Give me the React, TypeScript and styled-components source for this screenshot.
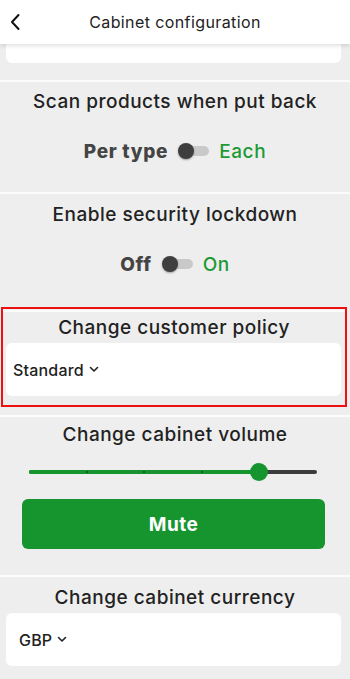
import React from "react";
import styled, { createGlobalStyle } from "styled-components";

const Global = createGlobalStyle`
  html, body { margin: 0; padding: 0; background: #eeeeee; }
  body { font-family: Inter, "Noto Sans", Roboto, sans-serif; overflow: hidden; }
  * { box-sizing: border-box; }
`;

const GREEN = "#16952f";

const Page = styled.div`
  width: 350px;
  height: 679px;
  background: #eeeeee;
  display: flex;
  flex-direction: column;
  overflow: hidden;
`;

const Header = styled.header`
  height: 44px;
  flex: none;
  background: #ffffff;
  display: flex;
  align-items: center;
  justify-content: center;
  position: relative;
  z-index: 2;
  box-shadow: 0 2px 4px rgba(0, 0, 0, 0.12);
`;

const BackButton = styled.button`
  position: absolute;
  left: 6px;
  top: 12px;
  width: 18px;
  height: 20px;
  border: 0;
  background: none;
  padding: 0;
  display: flex;
  align-items: center;
  justify-content: center;
`;

const HeaderTitle = styled.h1`
  margin: 0;
  font-size: 16px;
  font-weight: 400;
  color: #222;
  letter-spacing: 0.4px;
`;

const PeekCard = styled.div`
  height: 19px;
  margin: 0 9px 0 6px;
  background: #ffffff;
  border-radius: 0 0 6px 6px;
  flex: none;
`;

const Section = styled.section<{ $pt: number; $pb: number; $mt: number }>`
  margin-top: ${(p) => p.$mt}px;
  border-top: 2px solid #fbfbfb;
  padding: ${(p) => p.$pt}px 0 ${(p) => p.$pb}px;
  display: flex;
  flex-direction: column;
  align-items: center;
  flex: none;
`;

const Highlight = styled.div`
  margin: 0 3px 0 1px;
  border: 2px solid #ee1111;
  flex: none;
`;

const Title = styled.h2`
  margin: 0;
  font-size: 19px;
  line-height: 22px;
  font-weight: 500;
  color: #222;
  text-align: center;
  letter-spacing: 0.5px;
  white-space: nowrap;
`;

const ToggleRow = styled.div<{ $mt: number }>`
  margin-top: ${(p) => p.$mt}px;
  height: 24px;
  display: flex;
  align-items: center;
  gap: 10px;
`;

const OffLabel = styled.span`
  font-size: 19px;
  font-weight: 800;
  color: #444;
  letter-spacing: 0.7px;
`;

const OnLabel = styled.span`
  font-size: 19px;
  font-weight: 500;
  color: #1d9a34;
  letter-spacing: 0.6px;
`;

const Track = styled.div`
  width: 30px;
  height: 10px;
  border-radius: 5px;
  background: #c9c9c9;
  position: relative;
  margin-left: 1px;
`;

const Thumb = styled.div`
  position: absolute;
  left: -1px;
  top: -3px;
  width: 16px;
  height: 16px;
  border-radius: 50%;
  background: #3e3e3e;
  box-shadow: 0 1px 2px rgba(0, 0, 0, 0.35);
`;

const SelectBox = styled.div<{ $pl: number; $mx: string }>`
  align-self: stretch;
  margin: ${(p) => p.$mx};
  height: 53px;
  background: #ffffff;
  border-radius: 6px;
  display: flex;
  align-items: center;
  padding-left: ${(p) => p.$pl}px;
  gap: 5px;
`;

const SelectText = styled.span`
  font-size: 16px;
  font-weight: 500;
  color: #222;
  letter-spacing: 0.2px;
`;

const SliderWrap = styled.div`
  align-self: stretch;
  margin: 16px 33px 0 29px;
  height: 20px;
  position: relative;
  display: flex;
  align-items: center;
`;

const SliderRail = styled.div`
  width: 100%;
  height: 4px;
  border-radius: 2px;
  background: #3d3d3d;
  position: relative;
`;

const SliderFill = styled.div`
  position: absolute;
  left: 0;
  top: 0;
  bottom: 0;
  border-radius: 2px;
  background: ${GREEN};
`;

const Tick = styled.div`
  position: absolute;
  top: 1px;
  width: 2px;
  height: 2px;
  border-radius: 1px;
  background: #1e4d26;
  margin-left: -1px;
`;

const SliderThumb = styled.div`
  position: absolute;
  top: 1px;
  width: 18px;
  height: 18px;
  margin-left: -9px;
  border-radius: 50%;
  background: ${GREEN};
`;

const MuteButton = styled.button`
  align-self: stretch;
  margin: 17px 25px 0 22px;
  height: 50px;
  border: 0;
  border-radius: 6px;
  background: ${GREEN};
  color: #ffffff;
  font-family: inherit;
  font-size: 19px;
  font-weight: 700;
  letter-spacing: 0.5px;
`;

const Chevron = () => (
  <svg width="10" height="7" viewBox="0 0 10 7" fill="none">
    <path d="M1.5 1.5 L5 5 L8.5 1.5" stroke="#222" strokeWidth="1.6" strokeLinecap="round" strokeLinejoin="round" />
  </svg>
);

const Toggle: React.FC<{ off: string; on: string; mt: number }> = ({ off, on, mt }) => (
  <ToggleRow $mt={mt}>
    <OffLabel>{off}</OffLabel>
    <Track>
      <Thumb />
    </Track>
    <OnLabel>{on}</OnLabel>
  </ToggleRow>
);

const steps = 5;
const value = 4;

export default function App() {
  const pct = (value / steps) * 100;
  return (
    <Page>
      <Global />
      <Header>
        <BackButton aria-label="Back">
          <svg width="12" height="18" viewBox="0 0 12 18" fill="none">
            <path d="M9.5 2 L3 9 L9.5 16" stroke="#111" strokeWidth="2" strokeLinecap="round" strokeLinejoin="round" />
          </svg>
        </BackButton>
        <HeaderTitle>Cabinet configuration</HeaderTitle>
      </Header>
      <PeekCard />
      <Section $mt={17} $pt={9} $pb={29}>
        <Title>Scan products when put back</Title>
        <Toggle off="Per type" on="Each" mt={26} />
      </Section>
      <Section $mt={0} $pt={10} $pb={31}>
        <Title>Enable security lockdown</Title>
        <Toggle off="Off" on="On" mt={26} />
      </Section>
      <Highlight>
        <Section $mt={1} $pt={5} $pb={9}>
          <Title>Change customer policy</Title>
          <SelectBox $pl={7} $mx="4px 4px 0 3px">
            <SelectText>Standard</SelectText>
            <Chevron />
          </SelectBox>
        </Section>
      </Highlight>
      <Section $mt={8} $pt={7} $pb={26}>
        <Title>Change cabinet volume</Title>
        <SliderWrap>
          <SliderRail>
            <SliderFill style={{ width: `${pct}%` }} />
            {Array.from({ length: steps - 1 }, (_, i) => (
              <Tick key={i} style={{ left: `${((i + 1) / steps) * 100}%` }} />
            ))}
          </SliderRail>
          <SliderThumb style={{ left: `${pct}%` }} />
        </SliderWrap>
        <MuteButton>Mute</MuteButton>
      </Section>
      <Section $mt={0} $pt={10} $pb={0}>
        <Title>Change cabinet currency</Title>
        <SelectBox $pl={13} $mx="4px 9px 0 6px">
          <SelectText>GBP</SelectText>
          <Chevron />
        </SelectBox>
      </Section>
    </Page>
  );
}
